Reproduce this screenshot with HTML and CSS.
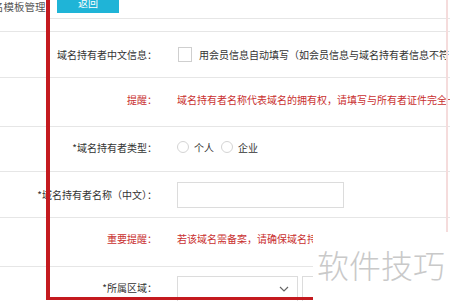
FILE: index.html
```html
<!DOCTYPE html>
<html lang="zh-CN">
    <head>
        <title>域名持有者信息</title>
        <meta charset="utf-8">
        <link rel="stylesheet" href="styles.css">
    </head>

    <body>
        <div class="pagina">
            <div class="topo">
                <div class="menu">名模板管理</div>
                <div class="acoes">
                    <a class="botao" href="#">返回</a>
                </div>
            </div>
            <div class="faixa"></div>

            <div class="linha alta">
                <div class="rotulo">域名持有者中文信息：</div>
                <div class="valor">
                    <span class="caixa"></span>
                    <span>用会员信息自动填写（如会员信息与域名持有者信息不符，请手动填写）</span>
                </div>
            </div>

            <div class="linha aviso">
                <div class="rotulo vermelho">提醒：</div>
                <div class="valor vermelho">域名持有者名称代表域名的拥有权，请填写与所有者证件完全一致的名称。</div>
            </div>

            <div class="linha tipo">
                <div class="rotulo">*域名持有者类型：</div>
                <div class="valor">
                    <span class="radio"></span><span class="opcao">个人</span>
                    <span class="radio"></span><span class="opcao">企业</span>
                </div>
            </div>

            <div class="linha alta">
                <div class="rotulo">*域名持有者名称（中文）：</div>
                <div class="valor">
                    <span class="campo"></span>
                </div>
            </div>

            <div class="linha aviso2">
                <div class="rotulo vermelho">重要提醒：</div>
                <div class="valor vermelho curto">若该域名需备案，请确保域名持有者名称与备案主体一致。</div>
            </div>

            <div class="linha regiao">
                <div class="rotulo">*所属区域：</div>
                <div class="valor">
                    <span class="selecao">
                        <svg width="10" height="6" viewBox="0 0 10 6"><path d="M1 1l4 4 4-4" fill="none" stroke="#666" stroke-width="1.2"/></svg>
                    </span>
                    <span class="selecao"></span>
                </div>
            </div>

            <div class="moldura"></div>
            <div class="marca">软件技巧</div>
        </div>
    </body>
</html>
```

FILE: styles.css
```css
* {
    font-family: "Noto Sans CJK SC", "Liberation Sans", sans-serif;
    box-sizing: border-box;
}
body {
    margin: 0px;
    padding: 0px;
    width: 450px;
    height: 301px;
    overflow: hidden;
    background: #fff;
}
.pagina {
    position: relative;
    height: 301px;
}
.topo {
    display: flex;
    height: 19px;
}
.menu {
    width: 53px;
    margin-left: -7px;
    font-size: 10.5px;
    line-height: 14px;
    color: #555;
    white-space: nowrap;
}
.acoes {
    flex: 1;
    border-bottom: solid 1px #e6e6e6;
    padding-left: 11px;
}
.botao {
    display: block;
    width: 62px;
    height: 21px;
    margin-top: -8px;
    background: #1fb4d7;
    color: #fff;
    font-size: 10px;
    line-height: 21px;
    text-align: center;
    text-decoration: none;
}
.faixa {
    height: 13px;
    border-bottom: solid 1px #e6e6e6;
}
.linha {
    display: grid;
    grid-template-columns: 160px 1fr;
    column-gap: 17px;
    align-items: center;
    border-bottom: solid 1px #e6e6e6;
    font-size: 10px;
    color: #333;
    white-space: nowrap;
}
.alta {
    height: 46px;
}
.aviso {
    height: 49px;
    padding-bottom: 6px;
}
.tipo {
    height: 45px;
    padding-bottom: 4px;
}
.aviso2 {
    height: 49px;
    padding-bottom: 8px;
}
.regiao {
    height: 40px;
    border-bottom: none;
    align-items: start;
    padding-top: 9px;
}
.regiao .rotulo {
    line-height: 24px;
}
.rotulo {
    text-align: right;
    padding-right: 3px;
    margin-left: -10px;
}
.valor {
    display: flex;
    align-items: center;
    overflow: hidden;
}
.curto {
    width: 136px;
}
.vermelho {
    color: #c92f2f;
}
.caixa {
    flex: none;
    width: 14px;
    height: 15px;
    border: solid 1px #cfcfcf;
    margin-left: 1px;
    margin-right: 7px;
}
.radio {
    flex: none;
    width: 12px;
    height: 12px;
    border: solid 1px #d4d4d4;
    border-radius: 50%;
    margin-right: 5px;
}
.opcao {
    margin-right: 7px;
}
.campo {
    width: 167px;
    height: 26px;
    border: solid 1px #dcdcdc;
}
.selecao {
    display: flex;
    align-items: center;
    justify-content: flex-end;
    width: 121px;
    height: 26px;
    border: solid 1px #dcdcdc;
    padding-right: 8px;
    margin-right: 4px;
    flex: none;
}
.moldura {
    position: absolute;
    left: 46px;
    top: -5px;
    width: 402px;
    height: 305px;
    border-left: solid 4px #c41a1f;
    border-bottom: solid 3px #c41a1f;
    border-right: solid 2px #f5dcdc;
}
.marca {
    position: absolute;
    left: 313px;
    top: 232px;
    width: 137px;
    height: 69px;
    background: #fff;
    padding-top: 12px;
    padding-left: 4px;
    font-size: 32px;
    font-weight: 300;
    line-height: 40px;
    color: #c9c9c9;
    white-space: nowrap;
}
```
